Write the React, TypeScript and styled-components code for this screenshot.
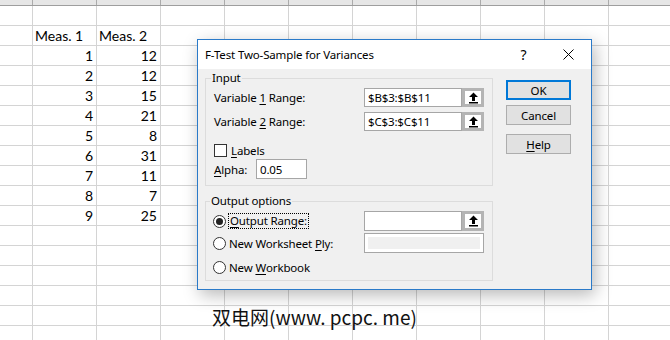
import React from "react";
import styled, { createGlobalStyle } from "styled-components";

const GlobalStyle = createGlobalStyle`
  html, body {
    margin: 0;
    padding: 0;
    background: #fff;
  }
  body {
    width: 670px;
    height: 340px;
    overflow: hidden;
  }
  * {
    box-sizing: border-box;
  }
`;

const Sheet = styled.div`
  position: relative;
  width: 670px;
  height: 340px;
  overflow: hidden;
  background: #fff;
  font-family: Lato, "Liberation Sans", sans-serif;
  font-size: 14px;
  color: #000;
`;

const HeaderStrip = styled.div`
  display: flex;
  height: 6px;
  background: #e6e6e6;
  border-bottom: 1px solid #9e9e9e;
`;

const HeaderCell = styled.div<{ $w: number }>`
  flex: 0 0 ${(p) => p.$w}px;
  border-right: 1px solid #ababab;
`;

const Row = styled.div`
  display: flex;
  height: 20px;
  border-bottom: 1px solid #d4d4d4;
`;

const Cell = styled.div<{ $w: number; $align?: "left" | "right" }>`
  flex: 0 0 ${(p) => p.$w}px;
  border-right: 1px solid #d4d4d4;
  padding: 0 3px 0 2px;
  line-height: 20px;
  text-align: ${(p) => p.$align || "left"};
  white-space: nowrap;
`;

const Dialog = styled.div`
  position: absolute;
  left: 197px;
  top: 39px;
  width: 395px;
  height: 251px;
  display: flex;
  flex-direction: column;
  border: 1px solid #2a7ac9;
  background: #f0f0f0;
  box-shadow: 3px 5px 16px rgba(0, 0, 0, 0.28);
  font-family: "Noto Sans", "Open Sans", sans-serif;
  font-size: 11.5px;
  letter-spacing: -0.15px;
  color: #000;
`;

const TitleBar = styled.div`
  display: flex;
  align-items: center;
  height: 29px;
  background: #fff;
  padding-left: 7px;
`;

const TitleText = styled.div`
  flex: 1;
  font-size: 11.5px;
`;

const TitleButton = styled.div`
  width: 45px;
  height: 29px;
  display: flex;
  align-items: center;
  justify-content: center;
  font-size: 14px;
`;

const Body = styled.div`
  flex: 1;
  display: flex;
  gap: 13px;
  padding: 1px 20px 9px 7px;
`;

const LeftColumn = styled.div`
  width: 288px;
  display: flex;
  flex-direction: column;
  gap: 7px;
`;

const Group = styled.fieldset<{ $pl: number; $pb: number }>`
  margin: 0;
  min-width: 0;
  border: 1px solid #dcdcdc;
  padding: 0 8px ${(p) => p.$pb}px ${(p) => p.$pl}px;
  display: flex;
  flex-direction: column;
`;

const Legend = styled.legend`
  padding: 0 1px;
  margin-left: -3px;
  line-height: 16px;
  font-size: 11.5px;
`;

const FormRow = styled.div<{ $h: number; $mt: number }>`
  display: flex;
  align-items: center;
  height: ${(p) => p.$h}px;
  margin-top: ${(p) => p.$mt}px;
`;

const FieldLabel = styled.div<{ $w?: number }>`
  flex: 0 0 ${(p) => p.$w ?? 150}px;
  display: flex;
  align-items: center;
  white-space: nowrap;
`;

const U = styled.span`
  text-decoration: underline;
  text-underline-offset: 2px;
`;

const RangeField = styled.div`
  display: flex;
  width: 120px;
  height: 100%;
`;

const TextBox = styled.div<{ $w?: number }>`
  flex: ${(p) => (p.$w ? `0 0 ${p.$w}px` : "1")};
  height: 100%;
  border: 1px solid #a6a6a6;
  background: #fff;
  padding-left: 3px;
  display: flex;
  align-items: center;
`;

const PickButton = styled.div`
  flex: 0 0 22px;
  height: 100%;
  border: 3px solid #b4b4b4;
  background: #fff;
  display: flex;
  align-items: center;
  justify-content: center;
`;

const DisabledBox = styled.div`
  width: 120px;
  height: 100%;
  border: 1px solid #a6a6a6;
  background: #fff;
  padding: 3px;
`;

const DisabledInner = styled.div`
  width: 100%;
  height: 100%;
  background: #f0f0f0;
`;

const CheckBox = styled.span`
  width: 13px;
  height: 13px;
  border: 1px solid #333;
  background: #fff;
  margin-right: 4px;
`;

const Radio = styled.span<{ $on?: boolean }>`
  width: 13px;
  height: 13px;
  border-radius: 50%;
  border: 1px solid #333;
  background: #fff;
  margin-right: 3px;
  display: flex;
  align-items: center;
  justify-content: center;
  &::after {
    content: "";
    display: ${(p) => (p.$on ? "block" : "none")};
    width: 7px;
    height: 7px;
    border-radius: 50%;
    background: #222;
  }
`;

const Focused = styled.span`
  outline: 1px dotted #000;
  padding: 0 1px;
  line-height: 14px;
`;

const ButtonColumn = styled.div`
  width: 66px;
  display: flex;
  flex-direction: column;
  padding-top: 10px;
`;

const PushButton = styled.div<{ $default?: boolean; $mt?: number }>`
  height: 20px;
  margin-top: ${(p) => p.$mt ?? 0}px;
  background: #e1e1e1;
  border: ${(p) => (p.$default ? "2px solid #0078d7" : "1px solid #adadad")};
  display: flex;
  align-items: center;
  justify-content: center;
  font-size: 11.5px;
`;

const Watermark = styled.div`
  position: absolute;
  left: 212px;
  top: 304px;
  font-family: "Noto Sans CJK SC", sans-serif;
  font-size: 19px;
  font-weight: 400;
  line-height: 26px;
  color: #111;
  white-space: nowrap;
`;

const PickIcon = () => (
  <svg width="11" height="12" viewBox="0 0 11 12">
    <path d="M5.5 0.5 L10 5 H7 V9 H4 V5 H1 Z" fill="#000" />
    <rect x="1" y="10" width="9" height="1.5" fill="#000" />
  </svg>
);

const CloseIcon = () => (
  <svg width="11" height="11" viewBox="0 0 11 11">
    <path d="M0.5 0.5 L10.5 10.5 M10.5 0.5 L0.5 10.5" stroke="#000" strokeWidth="1" />
  </svg>
);

const colB = ["", "Meas. 1", "1", "2", "3", "4", "5", "6", "7", "8", "9"];
const colC = ["", "Meas. 2", "12", "12", "15", "21", "8", "31", "11", "7", "25"];
const widths = [33, 64, 64, 64, 64, 64, 64, 64, 64, 64, 64];

export default function App() {
  const rows = Array.from({ length: 17 }, (_, i) => i);
  return (
    <Sheet>
      <GlobalStyle />
      <HeaderStrip>
        {widths.map((w, i) => (
          <HeaderCell key={i} $w={w} />
        ))}
      </HeaderStrip>
      {rows.map((r) => {
        const b = colB[r] ?? "";
        const c = colC[r] ?? "";
        const isHead = r === 1;
        return (
          <Row key={r}>
            {widths.map((w, i) => (
              <Cell key={i} $w={w} $align={isHead ? "left" : "right"}>
                {i === 1 ? b : i === 2 ? c : ""}
              </Cell>
            ))}
          </Row>
        );
      })}

      <Dialog>
        <TitleBar>
          <TitleText>F-Test Two-Sample for Variances</TitleText>
          <TitleButton>?</TitleButton>
          <TitleButton>
            <CloseIcon />
          </TitleButton>
        </TitleBar>
        <Body>
          <LeftColumn>
            <Group $pl={8} $pb={6}>
              <Legend>Input</Legend>
              <FormRow $h={19} $mt={2}>
                <FieldLabel>
                  Variable&nbsp;<U>1</U>&nbsp;Range:
                </FieldLabel>
                <RangeField>
                  <TextBox>$B$3:$B$11</TextBox>
                  <PickButton>
                    <PickIcon />
                  </PickButton>
                </RangeField>
              </FormRow>
              <FormRow $h={19} $mt={5}>
                <FieldLabel>
                  Variable&nbsp;<U>2</U>&nbsp;Range:
                </FieldLabel>
                <RangeField>
                  <TextBox>$C$3:$C$11</TextBox>
                  <PickButton>
                    <PickIcon />
                  </PickButton>
                </RangeField>
              </FormRow>
              <FormRow $h={16} $mt={11}>
                <FieldLabel>
                  <CheckBox />
                  <U>L</U>abels
                </FieldLabel>
              </FormRow>
              <FormRow $h={20} $mt={1}>
                <FieldLabel $w={42}>
                  <U>A</U>lpha:
                </FieldLabel>
                <TextBox $w={51}>0.05</TextBox>
              </FormRow>
            </Group>
            <Group $pl={7} $pb={3}>
              <Legend>Output options</Legend>
              <FormRow $h={20} $mt={2}>
                <FieldLabel $w={151}>
                  <Radio $on />
                  <Focused>
                    <U>O</U>utput Range:
                  </Focused>
                </FieldLabel>
                <RangeField>
                  <TextBox />
                  <PickButton>
                    <PickIcon />
                  </PickButton>
                </RangeField>
              </FormRow>
              <FormRow $h={20} $mt={2}>
                <FieldLabel $w={151}>
                  <Radio />
                  New Worksheet&nbsp;<U>P</U>ly:
                </FieldLabel>
                <DisabledBox>
                  <DisabledInner />
                </DisabledBox>
              </FormRow>
              <FormRow $h={20} $mt={4}>
                <FieldLabel $w={151}>
                  <Radio />
                  New&nbsp;<U>W</U>orkbook
                </FieldLabel>
              </FormRow>
            </Group>
          </LeftColumn>
          <ButtonColumn>
            <PushButton $default>OK</PushButton>
            <PushButton $mt={5}>Cancel</PushButton>
            <PushButton $mt={9}>
              <U>H</U>elp
            </PushButton>
          </ButtonColumn>
        </Body>
      </Dialog>

      <Watermark>双电网(www. pcpc. me)</Watermark>
    </Sheet>
  );
}
